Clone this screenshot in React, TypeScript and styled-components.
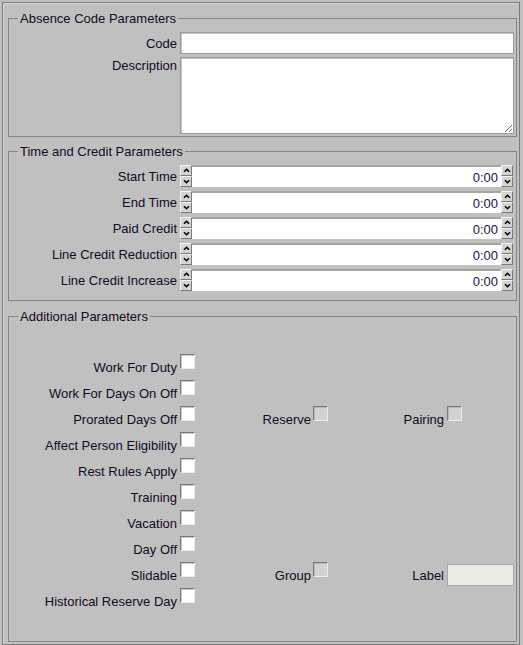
import React from "react";
import styled, { createGlobalStyle } from "styled-components";

const timeRows = [
  "Start Time",
  "End Time",
  "Paid Credit",
  "Line Credit Reduction",
  "Line Credit Increase",
];

type Extra = { kind: "check" | "field"; label: string };

const checkRows: { label: string; mid?: Extra; right?: Extra }[] = [
  { label: "Work For Duty" },
  { label: "Work For Days On Off" },
  {
    label: "Prorated Days Off",
    mid: { kind: "check", label: "Reserve" },
    right: { kind: "check", label: "Pairing" },
  },
  { label: "Affect Person Eligibility" },
  { label: "Rest Rules Apply" },
  { label: "Training" },
  { label: "Vacation" },
  { label: "Day Off" },
  {
    label: "Slidable",
    mid: { kind: "check", label: "Group" },
    right: { kind: "field", label: "Label" },
  },
  { label: "Historical Reserve Day" },
];

function Chevron({ down }: { down?: boolean }) {
  return (
    <svg width="7" height="5" viewBox="0 0 7 5">
      <path
        d={down ? "M1 1.2 L3.5 3.7 L6 1.2" : "M1 3.8 L3.5 1.3 L6 3.8"}
        fill="none"
        stroke="#000"
        strokeWidth="1.6"
      />
    </svg>
  );
}

function Spinner() {
  return (
    <SpinStack>
      <SpinButton>
        <Chevron />
      </SpinButton>
      <SpinButton>
        <Chevron down />
      </SpinButton>
    </SpinStack>
  );
}

export default function App() {
  return (
    <>
      <GlobalStyle />
      <Frame>
        <Group $top={0} $pt={6} $pb={2}>
          <Legend>Absence Code Parameters</Legend>
          <FormRow>
            <FieldLabel>Code</FieldLabel>
            <TextBox type="text" defaultValue="" />
          </FormRow>
          <FormRow $gap={3}>
            <FieldLabel $top>Description</FieldLabel>
            <TextArea defaultValue="" />
          </FormRow>
        </Group>

        <Group $top={7} $pt={6} $pb={9}>
          <Legend>Time and Credit Parameters</Legend>
          {timeRows.map((label, i) => (
            <TimeRow key={label} $first={i === 0}>
              <FieldLabel>{label}</FieldLabel>
              <Spinner />
              <TimeBox type="text" readOnly value="0:00" />
              <Spinner />
            </TimeRow>
          ))}
        </Group>

        <Group $top={8} $pt={30} $pb={27}>
          <Legend>Additional Parameters</Legend>
          {checkRows.map((row) => (
            <CheckRow key={row.label}>
              <CheckLabel $pad={3}>{row.label}</CheckLabel>
              <CheckBox />
              <CheckLabel $pad={2}>{row.mid?.label}</CheckLabel>
              <div>{row.mid && <CheckBox $disabled />}</div>
              <CheckLabel $pad={3}>{row.right?.label}</CheckLabel>
              <div>
                {row.right?.kind === "check" && <CheckBox $disabled />}
                {row.right?.kind === "field" && <DisabledField />}
              </div>
            </CheckRow>
          ))}
        </Group>
      </Frame>
    </>
  );
}

const GlobalStyle = createGlobalStyle`
  html, body {
    margin: 0;
    padding: 0;
    background: #c0c0c0;
    overflow: hidden;
  }
  body {
    font-family: "Liberation Sans", Arial, sans-serif;
    font-size: 13px;
    color: #120a26;
  }
`;

const Frame = styled.div`
  box-sizing: border-box;
  width: 518px;
  height: 643px;
  margin: 2px 0 0 2px;
  padding: 8px 2px 0 5px;
  border: 1px solid #7c7c7c;
  box-shadow: inset 1px 1px 0 #d8d8d8;
`;

const Group = styled.fieldset<{ $top: number; $pt: number; $pb: number }>`
  margin: ${(p) => p.$top}px 0 0 0;
  padding: ${(p) => p.$pt}px 0 ${(p) => p.$pb}px 0;
  border: 1px solid #858585;
  min-width: 0;
`;

const Legend = styled.legend`
  margin-left: 9px;
  padding: 0 2px;
  line-height: 15px;
  font-size: 13px;
`;

const FormRow = styled.div<{ $gap?: number }>`
  display: grid;
  grid-template-columns: 171px 334px;
  margin-top: ${(p) => p.$gap ?? 0}px;
`;

const FieldLabel = styled.div<{ $top?: boolean }>`
  text-align: right;
  padding-right: 3px;
  line-height: 15px;
  align-self: ${(p) => (p.$top ? "start" : "center")};
  padding-top: ${(p) => (p.$top ? 1 : 0)}px;
  white-space: nowrap;
`;

const TextBox = styled.input`
  box-sizing: border-box;
  width: 334px;
  height: 22px;
  margin: 0;
  padding: 0 3px;
  border: 1px solid #9c9c9c;
  box-shadow: inset 1px 1px 0 #c4c4c4;
  background: #fff;
  font: inherit;
  outline: none;
`;

const TextArea = styled.textarea`
  box-sizing: border-box;
  width: 334px;
  height: 77px;
  margin: 0;
  padding: 2px 3px;
  border: 1px solid #9c9c9c;
  box-shadow: inset 1px 1px 0 #c4c4c4;
  background: #fff;
  font: inherit;
  outline: none;
  display: block;
`;

const TimeRow = styled.div<{ $first?: boolean }>`
  display: grid;
  grid-template-columns: 171px 12px 309px 12px;
  align-items: center;
  height: 22px;
  margin-top: ${(p) => (p.$first ? 0 : 4)}px;
`;

const SpinStack = styled.div`
  display: flex;
  flex-direction: column;
  height: 22px;
`;

const SpinButton = styled.div`
  box-sizing: border-box;
  height: 11px;
  display: flex;
  align-items: center;
  justify-content: center;
  background: #d4d4d4;
  border-style: solid;
  border-width: 1px;
  border-color: #f4f4f4 #7a7a7a #7a7a7a #f4f4f4;
`;

const TimeBox = styled.input`
  box-sizing: border-box;
  width: 309px;
  height: 22px;
  margin: 0;
  padding: 0 3px 0 0;
  border: none;
  border-top: 2px solid #a4a4a4;
  background: #fff;
  text-align: right;
  font: inherit;
  color: #1c1050;
  outline: none;
`;

const CheckRow = styled.div`
  display: grid;
  grid-template-columns: 171px 15px 118px 15px 119px 67px;
  align-items: start;
  height: 26px;
`;

const CheckLabel = styled.div<{ $pad: number }>`
  text-align: right;
  padding-right: ${(p) => p.$pad}px;
  padding-top: 6px;
  line-height: 15px;
  white-space: nowrap;
`;

const CheckBox = styled.div<{ $disabled?: boolean }>`
  box-sizing: border-box;
  width: 15px;
  height: 15px;
  background: ${(p) => (p.$disabled ? "#d2d2d2" : "#ffffff")};
  border-style: solid;
  border-width: 1px;
  border-color: #7a7a7a #ececec #ececec #7a7a7a;
  box-shadow: inset 1px 1px 0 ${(p) => (p.$disabled ? "#b8b8b8" : "#c8c8c8")};
`;

const DisabledField = styled.div`
  box-sizing: border-box;
  width: 67px;
  height: 22px;
  margin-top: 2px;
  background: #ebebe4;
  border: 1px solid #a8a8a8;
`;
